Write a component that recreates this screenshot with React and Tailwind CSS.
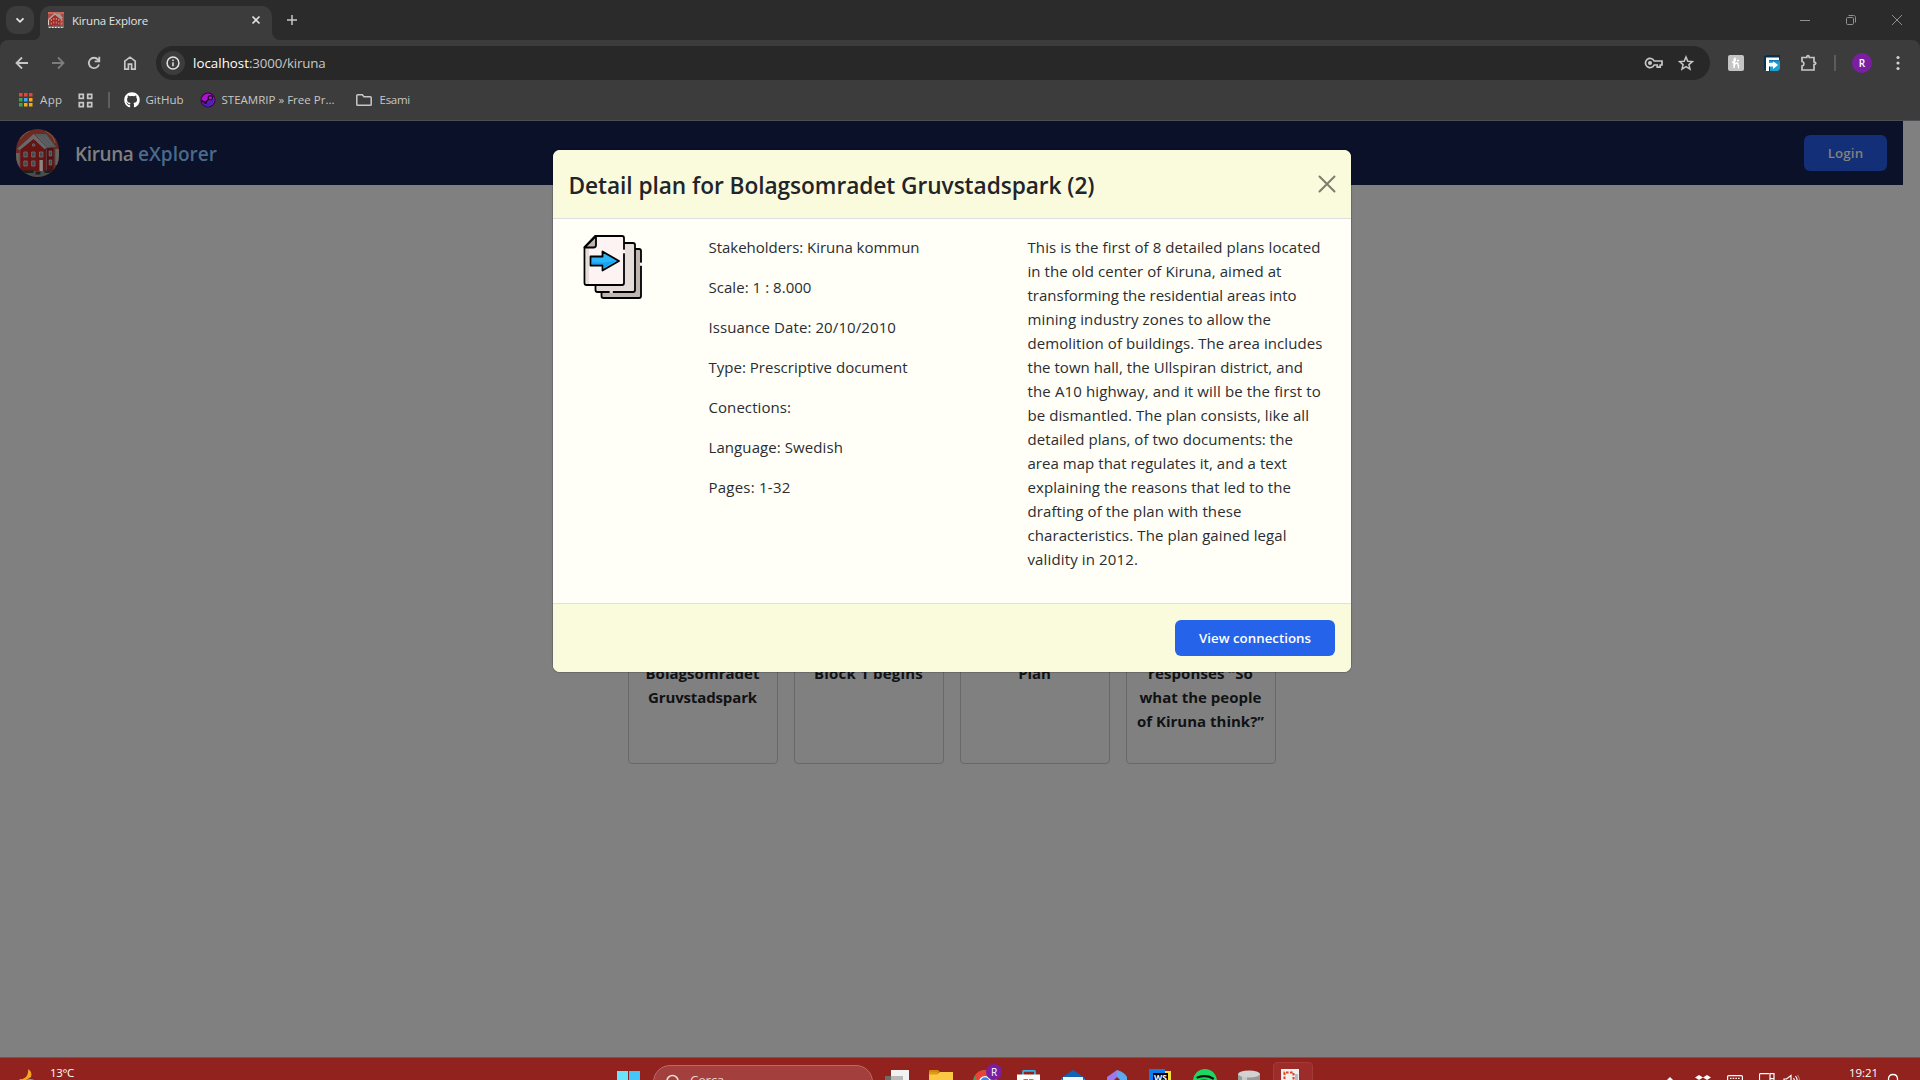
import React, { useLayoutEffect, useRef } from "react";
import { FaGithub } from "react-icons/fa";

// Text run whose tracking is computed so that it fills the given width.
function Fit({ w, className = "", children }) {
  const ref = useRef(null);
  useLayoutEffect(() => {
    const el = ref.current;
    el.style.letterSpacing = "0px";
    const natural = el.getBoundingClientRect().width;
    el.style.letterSpacing = `${(w - natural) / el.textContent.length}px`;
  }, [w]);
  return (
    <span ref={ref} className={`inline-block whitespace-pre ${className}`}>
      {children}
    </span>
  );
}

function House({ className }) {
  return (
    <svg className={className} viewBox="0 0 44 48" preserveAspectRatio="none">
      <rect width="44" height="48" fill="#6b2a22" />
      <path d="M30 2c4 2 9 6 10 12M4 10c3-4 7-7 10-8" stroke="#7d5546" strokeWidth="1.200" fill="none" />
      <path d="M0 24h4v17H0zM40 20h4v16h-4z" fill="#66625e" />
      <path d="M4 19 18 7l13 11v25H4z" fill="#661313" />
      <path d="M30 17h10v25H30z" fill="#4d1113" />
      <path d="M1 20 18 5l14 14-3 1L18 10 4 21z" fill="#676a6d" />
      <path d="M19 5h12l10 13-9 1z" fill="#54595e" />
      <path d="M22 7l11 10M26 7l9 10M30 7l7 9" stroke="#6d6f70" strokeWidth=".6" />
      <path d="M4 21v22M31 20v23M39 18v24" stroke="#6b5050" strokeWidth=".8" />
      <g fill="#3d4a50" stroke="#77706e" strokeWidth=".8">
        <path d="M8 23h3.500v5H8zM16 23h3.500v5H16zM24 23h3.500v5H24zM8 32h3.500v5H8zM16 32h3.500v5H16zM34 22h2.500v5H34zM34 31h2.500v5H34z" />
        <circle cx="18" cy="16" r="1.300" />
      </g>
      <path d="M24 31h3.500v11H24z" fill="#8b8683" />
      <path d="M0 42h44v6H0z" fill="#4a4d50" />
      <path d="M6 41.500h12v2.500H6zM20 42.500h5v3h-5zM29 41.500h9v2.500h-9z" fill="#18231f" />
    </svg>
  );
}

function FavHouse() {
  return (
    <svg className="h-4 w-4" viewBox="0 0 16 16">
      <rect width="16" height="16" fill="#a94740" />
      <path d="M0 0h16v2H0z" fill="#c9675a" />
      <path d="M0 7 7 1l7 6v1L7 3 0 9z" fill="#b0a4a0" />
      <path d="M8 2h4l3 4-2 1z" fill="#a09a98" />
      <path d="M1.500 8 7 3l5 5v6H1.500z" fill="#a32a27" />
      <path d="M3.300 7v6.500M5.800 6v7.500M8.300 6v7.500M10.800 7v6.500M13.800 7v6.500" stroke="#d0a8a2" strokeWidth=".8" strokeDasharray="2 1.500" />
      <path d="M0 8h1v5H0z" fill="#d8ccc8" />
      <path d="M0 14h16v2H0z" fill="#77706e" />
      <path d="M1 15.500h14" stroke="#e8e8e8" strokeDasharray="1.500 1.500" />
    </svg>
  );
}

function TabStrip() {
  return (
    <div className="flex h-10 bg-[#2b2b2b]">
      <div className="ml-1.5 mt-1.5 flex h-7 w-7 items-center justify-center rounded-[10px] bg-[#3c3c3c]">
        <svg className="h-4 w-4" viewBox="0 0 16 16" fill="none" stroke="#e3e3e3" strokeWidth="1.8">
          <path d="m4.500 6.300 3.500 3.500 3.500-3.500" />
        </svg>
      </div>
      <div className="mt-1.5 flex w-[6px] items-end bg-[#3c3c3c]">
        <div className="h-full w-full rounded-br-[6px] bg-[#2b2b2b]" />
      </div>
      <div className="mt-1.5 flex h-[34px] w-[232px] items-start rounded-t-[10px] bg-[#3c3c3c] pl-2 pt-1.5">
        <FavHouse />
        <Fit w={76} className="ml-2 mt-px h-4 text-[11.5px] leading-4 text-[#e3e3e3]">Kiruna Explore</Fit>
        <svg className="ml-auto mr-2 h-4 w-4" viewBox="0 0 16 16" stroke="#e3e3e3" strokeWidth="1.6">
          <path d="m4.500 4.500 7 7m0-7-7 7" />
        </svg>
      </div>
      <div className="mt-1.5 w-2 bg-[#3c3c3c]">
        <div className="h-full w-full rounded-bl-[8px] bg-[#2b2b2b]" />
      </div>
      <svg className="ml-1 mt-3 h-4 w-4" viewBox="0 0 16 16" stroke="#c7c7c7" strokeWidth="1.5">
        <path d="M8 3v10M3 8h10" />
      </svg>
      <div className="ml-auto mr-[15px] mt-3 flex gap-[30px]">
        <svg className="h-4 w-4" viewBox="0 0 16 16" stroke="#909090"><path d="M3 8.500h10" /></svg>
        <svg className="h-4 w-4" viewBox="0 0 16 16" fill="none" stroke="#909090">
          <rect x="3.500" y="5.500" width="7" height="7" rx="1.200" />
          <path d="M5.500 3.500h5.200c1.200 0 1.800.8 1.800 1.800v5.200" />
        </svg>
        <svg className="h-4 w-4" viewBox="0 0 16 16" stroke="#909090"><path d="m3 3 10 10m0-10L3 13" /></svg>
      </div>
    </div>
  );
}

function Toolbar() {
  return (
    <div className="bg-[#2b2b2b]">
      <div className="flex h-[46px] items-center rounded-t-lg bg-[#3c3c3c]">
        <svg className="ml-[13px] h-[18px] w-[18px]" viewBox="0 0 18 18" fill="none" stroke="#c7c7c7" strokeWidth="1.8">
          <path d="M15 9H4M9 3.500 3.500 9 9 14.500" />
        </svg>
        <svg className="ml-[18px] h-[18px] w-[18px]" viewBox="0 0 18 18" fill="none" stroke="#7c7c7c" strokeWidth="1.800">
          <path d="M3 9h11M9 3.500 14.500 9 9 14.500" />
        </svg>
        <svg className="ml-[18px] h-[18px] w-[18px]" viewBox="0 0 18 18" fill="none" stroke="#c7c7c7" strokeWidth="1.8">
          <path d="M14 10.500A5.200 5.200 0 1 1 13 5.600L14.500 7.200M14.300 2.800v4.600H9.700" />
        </svg>
        <svg className="ml-[18px] h-[18px] w-[18px]" viewBox="0 0 18 18" fill="none" stroke="#c7c7c7" strokeWidth="1.700">
          <path d="M3.800 7.200v8h3.600v-5h3.200v5h3.600v-8L9 3.200z" />
        </svg>
        <div className="ml-[17px] flex h-[34px] w-[1554px] items-center rounded-full bg-[#282828] pl-[5px] pr-4">
          <div className="flex h-6 w-6 items-center justify-center rounded-full bg-[#3c3c3c]">
            <svg className="h-4 w-4" viewBox="0 0 16 16" fill="none" stroke="#e3e3e3" strokeWidth="1.500">
              <circle cx="8" cy="8" r="5.900" />
              <path d="M8 7.300v4M8 4.600v1.500" />
            </svg>
          </div>
          <div className="ml-2 h-[20px] pt-px text-[13.3px] leading-[19px]">
            <Fit w={56} className="text-white">localhost</Fit>
            <Fit w={76.500} className="text-[#c7c7c7]">:3000/kiruna</Fit>
          </div>
          <svg className="ml-auto h-4 w-5" viewBox="0 0 20 16" fill="none" stroke="#c7c7c7" strokeWidth="1.700">
            <path d="M10.200 6A4.600 4.600 0 1 0 10.200 10h3v2.200h3V10H18V6z" />
            <circle cx="6" cy="8" r="1.200" fill="#c7c7c7" />
          </svg>
          <svg className="ml-[14px] h-4 w-4" viewBox="0 0 16 16" fill="none" stroke="#c7c7c7" strokeWidth="1.500">
            <path d="m8 2 1.800 4.200 4.600.4-3.500 3 1.100 4.500L8 11.700l-4 2.400 1.100-4.500-3.500-3 4.600-.4z" />
          </svg>
        </div>
        <div className="ml-[18px] flex h-4 w-4 items-center justify-center rounded-[2px] bg-[#c4c4c4]">
          <svg className="h-3 w-3" viewBox="0 0 12 12" fill="none" stroke="#fff" strokeWidth="1.500">
            <path d="M2 5.500C5 5 6 3 5 1.300 4 1 4 5 4 11c0-3 1-5 3-5s1 5 2 5M7 3.500h2" />
          </svg>
        </div>
        <svg className="ml-5 h-4 w-4" viewBox="0 0 16 16">
          <path d="M0 1 4 0h12v13l-3 3H2L0 13z" fill="#07304f" />
          <path d="M6 7h10v7l-2 2H6z" fill="#1f9fd0" />
          <path d="M2 2.500h13v2.500H5v2.500h4V6l5 4-5 4v-2.500H5V16H2z" fill="#fff" />
          <path d="M5 5.300h11v2.200h-5L9 6v1.500H5z" fill="#1c8fd0" />
        </svg>
        <svg className="ml-[19px] h-5 w-5" viewBox="0 0 20 20" fill="none" stroke="#c7c7c7" strokeWidth="1.700">
          <path d="M3 4.500h4.800C7.800 2 10.200 2 10.200 4.500H15V9c2.400 0 2.400 2.600 0 2.600V17H3v-4c2.600-.6 2.600-4 0-4.500z" />
        </svg>
        <div className="ml-[15px] h-4 w-0.5 bg-[#5c5c5c]" />
        <div className="ml-4 flex h-5 w-5 items-center justify-center rounded-full bg-[#7b1fa2] text-[10px] font-semibold text-white">R</div>
        <svg className="ml-[18px] h-4 w-4" viewBox="0 0 16 16" fill="#d0d0d0">
          <circle cx="8" cy="2.500" r="1.600" /><circle cx="8" cy="8" r="1.600" /><circle cx="8" cy="13.500" r="1.600" />
        </svg>
      </div>
    </div>
  );
}

function Bookmarks() {
  return (
    <div className="flex h-[35px] items-center border-b border-[#4b4e52] bg-[#3c3c3c] pb-[6px] text-[11.500px] leading-4 text-[#c7c7c7]">
      <svg className="ml-[19px] h-[14px] w-[14px]" viewBox="0 0 14 14">
        <path d="M0 0h3.500v3.500H0zM5 0h3.500v3.500H5zM10 0h3.500v3.500H10z" fill="#ea4335" />
        <path d="M0 5h3.500v3.500H0z" fill="#34a853" />
        <path d="M5 5h3.500v3.500H5z" fill="#4aa3f0" />
        <path d="M10 5h3.500v3.500H10zM5 10h3.500v3.500H5zM10 10h3.500v3.500H10z" fill="#f9ab0d" />
        <path d="M0 10h3.500v3.500H0z" fill="#34a853" />
      </svg>
      <Fit w={22.500} className="ml-[7px]">App</Fit>
      <svg className="ml-[15px] h-[15px] w-[15px]" viewBox="0 0 15 15" fill="none" stroke="#c7c7c7" strokeWidth="1.700">
        <path d="M1.300 1.300h4v4h-4zM9.700 1.300h4v4h-4zM1.300 9.700h4v4h-4zM9.700 9.700h4v4h-4z" />
      </svg>
      <div className="ml-[15px] h-4 w-0.5 bg-[#5f5f5f]" />
      <FaGithub className="ml-[14px] h-4 w-4 text-white" />
      <Fit w={38} className="ml-[6px]">GitHub</Fit>
      <svg className="ml-[16px] h-4 w-4" viewBox="0 0 16 16">
        <circle cx="8" cy="8" r="7.500" fill="#2a0740" />
        <circle cx="8" cy="8" r="6.500" fill="#b010d0" />
        <path d="M2 11c3 0 5 0 12-4 0 4-3 7-6 7.400-3 0-5-1.400-6-3.400z" fill="#4722b8" />
        <path d="m1.500 8.800 4 1.700 4-4" stroke="#20052e" strokeWidth="1.700" fill="none" />
        <circle cx="10.400" cy="5.800" r="2.200" fill="#b010d0" stroke="#20052e" strokeWidth="1.100" />
        <circle cx="5.700" cy="10.700" r="1.300" fill="#20052e" />
      </svg>
      <Fit w={113} className="ml-[6px]">STEAMRIP » Free Pr...</Fit>
      <svg className="ml-[20px] h-4 w-[18px]" viewBox="0 0 18 16" fill="none" stroke="#c7c7c7" strokeWidth="1.500">
        <path d="M2.700 2.700h4.600l1.700 2h6.300c.5 0 .9.300.9.800v7c0 .5-.4.800-.9.800H2.700c-.5 0-.9-.3-.9-.8v-9c0-.5.400-.8.900-.8z" />
      </svg>
      <Fit w={30.500} className="ml-[7px]">Esami</Fit>
    </div>
  );
}

function NavBar() {
  return (
    <div className="flex h-16 w-[1903px] items-center bg-[#0b1129] px-4">
      <div className="h-12 w-[43px] overflow-hidden rounded-full">
        <House className="h-full w-full" />
      </div>
      <div className="ml-4 mt-0.5 text-[19px] font-semibold leading-7">
        <Fit w={63} className="text-[#808080]">Kiruna </Fit>
        <Fit w={79} className="text-[#4a6a8c]">eXplorer</Fit>
      </div>
      <div className="ml-auto flex h-9 w-[83px] items-center justify-center rounded-md bg-[#122f77] pt-0.5 text-[13.300px] font-semibold text-[#828379]">
        <Fit w={35.500}>Login</Fit>
      </div>
    </div>
  );
}

const cards = [
  [["Bolagsomradet", 114], ["Gruvstadspark", 109]],
  [["Block 1 begins", 109]],
  [["Plan", 32.500]],
  [["responses “So", 105], ["what the people", 122], ["of Kiruna think?”", 127]],
];

function CardRow() {
  return (
    <div className="mt-[379px] flex w-[1903px] justify-center gap-4">
      {cards.map((lines) => (
        <div key={lines[0][0]} className="flex h-[200px] w-[150px] flex-col items-center rounded border border-[#686868] pt-[96px] text-[15px] font-bold leading-6 text-[#111214]">
          {lines.map(([t, w]) => (
            <div key={t} className="h-6"><Fit w={w}>{t}</Fit></div>
          ))}
        </div>
      ))}
    </div>
  );
}

function DocIcon() {
  return (
    <svg className="h-16 w-16" viewBox="0 0 64 64" stroke="#000" strokeWidth="1.800" strokeLinejoin="round" strokeLinecap="round">
      <path d="M20.500 14h37.500q2 0 2 2v45q0 2-2 2H22.500q-2 0-2-2z" fill="#bfb5b0" />
      <path d="M14.500 8h37.500q2 0 2 2v45q0 2-2 2h-35.500q-2 0-2-2z" fill="#e6dcd9" />
      <path d="M14 1h27q2 0 2 2v45q0 2-2 2H5.500q-2 0-2-2V12z" fill="#fdf3f3" />
      <path d="M5 13h3v36H5z" fill="#e6dcd9" stroke="none" />
      <path d="M15 1v9q0 2.500-2.500 2.500H3.500z" fill="#bfb5b0" />
      <path d="M9.500 21.500h12v-5L38 26 21.500 35.500v-5h-12z" fill="#2bb5fb" />
      <path d="M10.500 27c10 1.500 18 0 24-1.500L22.500 33v-3.500h-12z" fill="#0d93e8" stroke="none" opacity=".6" />
      <path d="M43 15.500v2" stroke="#fdf3f3" strokeWidth="2.200" />
      <path d="M60 28.500v1.500" stroke="#fdf3f3" strokeWidth="2.200" />
      <path d="M29.500 57h1.500" stroke="#e6dcd9" strokeWidth="2.200" />
    </svg>
  );
}

const facts = [
  ["Stakeholders: Kiruna kommun", 211],
  ["Scale: 1 : 8.000", 103],
  ["Issuance Date: 20/10/2010", 187.500],
  ["Type: Prescriptive document", 199],
  ["Conections:", 82.500],
  ["Language: Swedish", 134.500],
  ["Pages: 1-32", 82],
];

const description = [
  ["This is the first of 8 detailed plans located", 293],
  ["in the old center of Kiruna, aimed at", 254],
  ["transforming the residential areas into", 269],
  ["mining industry zones to allow the", 243.500],
  ["demolition of buildings. The area includes", 295],
  ["the town hall, the Ullspiran district, and", 275.500],
  ["the A10 highway, and it will be the first to", 293.500],
  ["be dismantled. The plan consists, like all", 281.500],
  ["detailed plans, of two documents: the", 265.500],
  ["area map that regulates it, and a text", 259.500],
  ["explaining the reasons that led to the", 263.500],
  ["drafting of the plan with these", 214],
  ["characteristics. The plan gained legal", 259],
  ["validity in 2012.", 110.500],
];

function Modal() {
  return (
    <div className="absolute left-[553px] top-[150px] flex w-[798px] flex-col overflow-hidden rounded-[7px] bg-[#fffff8] text-[#292d31] shadow-[0_0_1px_1px_rgba(0,0,0,0.18)]">
      <div className="flex h-[69px] items-center border-b border-[#dddfe0] bg-[#fafadc] pl-[15.500px] pr-[15px]">
        <Fit w={526} className="mt-[3px] text-[22.700px] font-semibold leading-9 text-[#212529]">Detail plan for Bolagsomradet Gruvstadspark (2)</Fit>
        <svg className="ml-auto h-[18px] w-[18px]" viewBox="0 0 18 18" stroke="#7d7d6e" strokeWidth="2" strokeLinecap="round">
          <path d="m1.500 1.500 15 15m0-15-15 15" />
        </svg>
      </div>
      <div className="flex h-[384px] pt-4 text-[15px] leading-6">
        <div className="ml-7 w-[127.500px]"><DocIcon /></div>
        <div className="flex w-[319px] flex-col gap-4">
          {facts.map(([t, w]) => (
            <div key={t} className="h-6"><Fit w={w}>{t}</Fit></div>
          ))}
        </div>
        <div className="flex flex-col">
          {description.map(([t, w]) => (
            <div key={t} className="h-6"><Fit w={w}>{t}</Fit></div>
          ))}
        </div>
      </div>
      <div className="flex h-[69px] items-center justify-end border-t border-[#dddfe0] bg-[#fafadc] pr-4">
        <div className="flex h-9 w-40 items-center justify-center rounded-md bg-[#2563eb] pt-0.5 text-[13.300px] font-semibold text-white">
          <Fit w={112}>View connections</Fit>
        </div>
      </div>
    </div>
  );
}

function Taskbar() {
  return (
    <div className="h-[23px] overflow-hidden border-t border-[#a04440] bg-[#91221e]">
      <div className="flex h-12 items-center text-white">
        <svg className="ml-[18px] h-[26px] w-6" viewBox="0 0 24 26">
          <path d="M10 0c3 2 4 4 3 8l-5 3-7 3c0-2 0-3 1-4 4 1 9-3 8-10z" fill="#f5a623" />
          <path d="M4 16a8.500 8 0 0 1 16-1l2 5H3z" fill="#8fb2f6" />
        </svg>
        <Fit w={24} className="-mt-[19px] ml-[8px] text-[11.500px] leading-4">13°C</Fit>
        <svg className="ml-[543px] h-[23px] w-[23px]" viewBox="0 0 23 23">
          <path d="M0 0h11v11H0z" fill="#68e4fb" /><path d="M12 0h11v11H12z" fill="#45c6fa" />
          <path d="M0 12h23v11H0z" fill="#22a3f2" />
        </svg>
        <div className="ml-[13px] flex h-[34px] w-[220px] items-center rounded-full border border-[#bb6a68] bg-[#a33f3d] pl-3">
          <svg className="h-4 w-4" viewBox="0 0 16 16" fill="none" stroke="#f3dcdc" strokeWidth="1.600">
            <circle cx="6.500" cy="7" r="5.500" /><path d="m10.500 11 4 4" />
          </svg>
          <Fit w={34} className="-mt-1 ml-2 text-[13.500px] leading-4 text-[#ecd0d0]">Cerca</Fit>
        </div>
        <svg className="ml-[12px] h-6 w-6" viewBox="0 0 24 24">
          <path d="M6 0h18v16H6z" fill="#f2f2f2" /><path d="M0 6h18v16H0z" fill="#6b6e68" /><path d="M6 6h12v10H6z" fill="#b9b9b9" />
        </svg>
        <svg className="ml-5 h-6 w-6" viewBox="0 0 24 24">
          <path d="M0 1q0-1 1-1h8l2 2H0z" fill="#d28a0c" /><path d="M0 4h8l3-2h13v20H0z" fill="#fcc945" /><path d="M0 2h10L8 4.500H0z" fill="#e09a12" />
        </svg>
        <svg className="ml-5 h-[36px] w-[30px]" viewBox="0 0 30 36">
          <circle cx="12" cy="18" r="12" fill="#34a853" />
          <path d="M1.600 12A12 12 0 0 1 22.400 12H12l-5 9z" fill="#ea4335" />
          <path d="M22.400 12A12 12 0 0 1 12 30l6-10z" fill="#fbc116" />
          <circle cx="12" cy="18" r="6" fill="#fff" /><circle cx="12" cy="18" r="4.700" fill="#3b82f6" />
          <circle cx="21" cy="8" r="8" fill="#7b1fa2" />
          <text x="21" y="11.500" fontSize="10" textAnchor="middle" fill="#fff">R</text>
        </svg>
        <svg className="ml-[14px] h-6 w-6" viewBox="0 0 24 24">
          <path d="M6 6V1.500Q6 .8 7 .8h10q1 0 1 .8V6" fill="none" stroke="#36b5ea" strokeWidth="1.700" />
          <path d="M0 4.500h23V23H0z" fill="#fff" /><path d="M6.500 9H11v4.500H6.500z" fill="#e05b2e" /><path d="M12 9h4.500v4.500H12z" fill="#6bae2a" />
        </svg>
        <svg className="ml-5 h-6 w-6" viewBox="0 0 24 24">
          <path d="M0 8 12 0l12 8v14H0z" fill="#0f64b8" /><path d="M2 7h20v5l-10 4-10-4z" fill="#f3f8fc" /><path d="M0 9l12 6 12-6v13H0z" fill="#35b4ee" />
        </svg>
        <svg className="ml-[21px] h-6 w-6" viewBox="0 0 24 24">
          <path d="M1 7 11 0v14l-6 4-4-3z" fill="#9c7be8" /><path d="M11 0q9 3 10 8v8l-7-5-3-1z" fill="#3a8de0" /><path d="M11 0v7l4 4 6-1V7Q18 2 11 0z" fill="#69b7f2" opacity=".7" />
          <path d="m8 10 3-3 4 4-2 3H8z" fill="#91221e" />
        </svg>
        <svg className="ml-[19px] h-[26px] w-6" viewBox="0 0 24 26">
          <path d="M0 0h13v22H0z" fill="#0b7ff0" /><path d="M15 2h7v17h-7z" fill="#f7e03c" /><path d="M10 0h6v5h-6z" fill="#087cf0" />
          <path d="M4 4h15v16H4z" fill="#000" />
          <text x="11.500" y="12" fontSize="8.500" fontWeight="700" textAnchor="middle" fill="#fff">WS</text>
        </svg>
        <svg className="ml-[20px] h-[26px] w-6" viewBox="0 0 24 26">
          <circle cx="12" cy="12" r="12" fill="#1ed760" />
          <path d="M4.500 8.500Q13 5.500 20 9.500M5.500 12.500q7-2.500 13 1.200" fill="none" stroke="#111" strokeWidth="2.200" strokeLinecap="round" />
        </svg>
        <svg className="ml-5 h-6 w-6" viewBox="0 0 24 24">
          <path d="M1 4h22v16H1z" fill="#9a9a9a" /><path d="M5 6h5v14H5z" fill="#c8c8c8" /><ellipse cx="12" cy="4" rx="11" ry="3.500" fill="#d2d2d2" />
        </svg>
        <div className="ml-[12px] flex h-[40px] w-10 items-center rounded border border-[#a23a36] bg-[#9c2c29] pl-[7px]">
          <svg className="h-[26px] w-5" viewBox="0 0 20 26">
            <path d="M0 0h18v20H0z" fill="#f0f0f0" /><path d="M14 5h3v14h-3z" fill="#b8bcc0" />
            <path d="M3.500 14V3.500h9V14" fill="none" stroke="#e0431b" strokeWidth="2" strokeDasharray="2.600 1.400" />
          </svg>
        </div>
        <svg className="ml-[351px] h-[18px] w-3" viewBox="0 0 12 18" fill="none" stroke="#fff" strokeWidth="1.500"><path d="m2 9 4-4 4 4" /></svg>
        <svg className="ml-[19px] h-4 w-4" viewBox="0 0 16 16" fill="#fff">
          <path d="m4 1 4 2.500L4 6 0 3.500zM12 1l4 2.500L12 6 8 3.500zM4 6l4 2.500L4 11 0 8.500zM12 6l4 2.500-4 2.500-4-2.500z" />
        </svg>
        <svg className="ml-[16px] h-[18px] w-4" viewBox="0 0 16 18" fill="none" stroke="#fff" strokeWidth="1.200">
          <rect x=".6" y="2.600" width="14.800" height="10" rx="1" /><path d="M3 5.300h10" strokeDasharray="1.500 1.200" />
        </svg>
        <svg className="ml-[16px] h-[18px] w-4" viewBox="0 0 16 18" fill="none" stroke="#fff" strokeWidth="1.200">
          <path d="M10 .6H1.500q-1 0-1 1V12H10M11 .6h4v5h-4zM11 5.600h4V16h-4z" />
        </svg>
        <svg className="ml-[8px] h-5 w-[17px]" viewBox="0 0 17 20" fill="none" stroke="#fff" strokeWidth="1.200">
          <path d="M1 7h2.500L8 3.500v11L3.500 11H1zM10.500 6q2 3 0 6M12.500 4q3.500 5 0 10" /><path d="M14.500 3q4 6 0 12" opacity=".4" />
        </svg>
        <Fit w={29} className="-mt-[19px] ml-[49px] text-[11.500px] leading-4">19:21</Fit>
        <svg className="ml-[9px] h-[18px] w-3" viewBox="0 0 12 18" fill="none" stroke="#fff" strokeWidth="1.300"><path d="M1.500 12V6q0-4.500 4.500-4.500T10.500 6v6z" /></svg>
      </div>
    </div>
  );
}

export default function App() {
  return (
    <div className="relative flex h-[1080px] w-[1920px] flex-col overflow-hidden bg-[#808080] font-['Open_Sans','Noto_Sans',sans-serif]">
      <TabStrip />
      <Toolbar />
      <Bookmarks />
      <div className="flex-1">
        <NavBar />
        <CardRow />
      </div>
      <Taskbar />
      <Modal />
    </div>
  );
}
